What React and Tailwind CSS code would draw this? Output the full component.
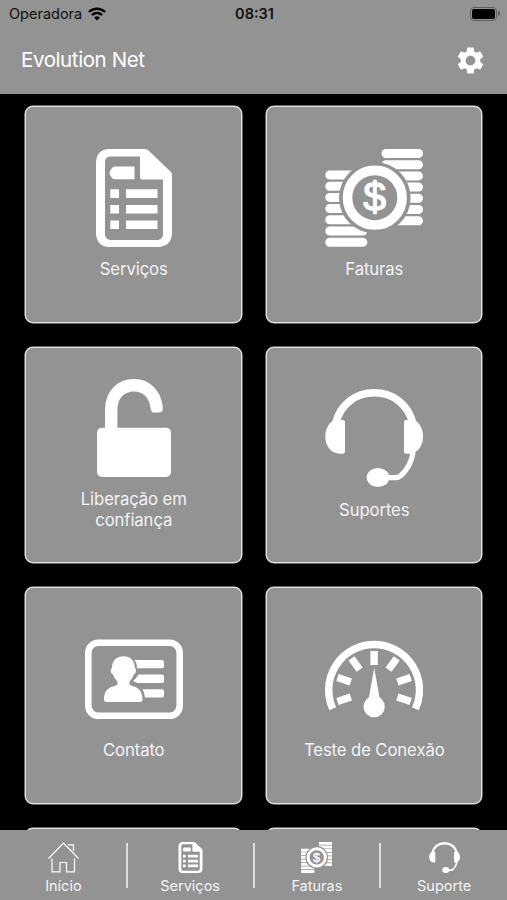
import React from 'react';

function ServicesIcon({ className }) {
  return (
    <svg viewBox="0 0 98 98" className={className} fill="currentColor">
      <path
        fillRule="evenodd"
        d="M23 0H60Q62 0 63.500 1.500L86 23Q87 24 87 26V85Q86 97 74 98H23Q12 97 11 85V13Q12 1 23 0ZM25 7.500Q20 8 20 13V85Q20 90 25 91H73Q78 90 78 85V30.500H57Q55 30.500 55 28V7.500Z"
      />
      <path d="M29.500 17.500H49.500V30.300H29.500Q28 30.300 27 29L25 26Q24 24 25 22L27 19Q28 17.500 29.500 17.500Z" />
      <path d="M25.300 40.300H34V49H25.300ZM41 40.300H72.500V49H41ZM25.300 56H34V64.500H25.300ZM41 56H72.500V64.500H41ZM25.300 71.500H34V80H25.300ZM41 71.500H72.500V80H41Z" />
    </svg>
  );
}

const stack = [0, 1, 2, 3, 4, 5, 6];

function BillsIcon({ className, square }) {
  return (
    <svg viewBox="0 0 98 98" className={className} fill="currentColor">
      {stack.map((i) => (
        <React.Fragment key={i}>
          <rect x="56.500" y={i * 11.2} width="41.500" height="9" rx={square ? 1 : 4.5} />
          <rect x="0.300" y={21.5 + i * 11.2} width="42" height="9" rx={square ? 1 : 4.5} />
        </React.Fragment>
      ))}
      <circle cx="49.800" cy="48.700" r="35.800" fill="#939393" />
      <circle cx="49.800" cy="48.700" r="27.300" fill="none" stroke="currentColor" strokeWidth="9.600" />
      <text
        x="49.600"
        y="62"
        textAnchor="middle"
        fontSize="41"
        fontFamily="Liberation Sans, sans-serif"
        stroke="currentColor"
        strokeWidth="1.300"
        strokeLinejoin="round"
      >
        $
      </text>
    </svg>
  );
}

function UnlockIcon({ className }) {
  return (
    <svg viewBox="0 0 98 98" className={className} fill="currentColor">
      <rect x="12" y="48.700" width="74" height="49.300" rx="5" />
      <path
        d="M26.200 52V31C26.200 15 36.500 6.200 48.800 6.200C61 6.200 69.800 14.500 71.400 27.500"
        fill="none"
        stroke="currentColor"
        strokeWidth="12.400"
      />
      <path d="M65.200 27L77.400 26Q78 30 77.600 31.500Q77 33 75 33.300L69 33.700Q66.500 33.500 66 31Z" />
    </svg>
  );
}

function HeadsetIcon({ className }) {
  return (
    <svg viewBox="0 0 98 98" className={className} fill="currentColor">
      <path
        d="M10.500 35C15 15 31 3.800 49.300 3.800S83.500 15 88 35"
        fill="none"
        stroke="currentColor"
        strokeWidth="7.600"
      />
      <path d="M10 31H18Q20 31 20 33V62.500Q20 64.700 17.500 64.700H15C6 64.700 0.300 57 0.300 47.500C0.300 41 3 35 8 31.500Z" />
      <path d="M88.500 31H81Q79 31 79 33V62.500Q79 64.700 81 64.700H84C92.500 64.700 98 57 98 47.500C98 41 95.500 35 90.500 31.500Z" />
      <path
        d="M88.200 63C86 76 81 82 76 86.500Q73.500 88.700 70 88.700H58"
        fill="none"
        stroke="currentColor"
        strokeWidth="5.200"
      />
      <ellipse cx="53" cy="88.500" rx="11.300" ry="9.400" />
    </svg>
  );
}

function ContactIcon({ className }) {
  return (
    <svg viewBox="0 0 98 98" className={className} fill="currentColor">
      <rect
        x="3.300"
        y="12.800"
        width="91.400"
        height="73"
        rx="10"
        fill="none"
        stroke="currentColor"
        strokeWidth="6.600"
      />
      <path d="M38.500 26.300C45.500 26.300 49.800 30.500 49.800 38C51.800 39 51.300 43.500 48.800 44.500C47.800 48 45.800 50 44.500 51.500V54.500C46.500 57 57.500 55.500 57.500 69.500Q57.500 72 55 72H21.500Q19 72 19 69.500C19 55.500 30.500 57 32.500 54.500V51.500C31 50 29 48 28 44.500C25.500 43.500 25 39 27 38C27 30.500 31.500 26.300 38.500 26.300Z" />
      <path d="M49.500 30H77Q79 30 79 32V36.300Q79 38.300 77 38.300H52Q52.500 34 49.500 30ZM53.500 44.500H77Q79 44.500 79 46.500V51Q79 53 77 53H52.500L48 51Q51 49 53.500 44.500ZM57.500 59.300H77Q79 59.300 79 61.300V65.500Q79 67.500 77 67.500H60Q59.500 63 57.500 59.300Z" />
    </svg>
  );
}

const ticks = [-108, -72, -36, 0, 36, 72, 108];

function GaugeIcon({ className }) {
  return (
    <svg viewBox="0 0 98 98" className={className} fill="currentColor">
      <path
        d="M7.800 78.800A45.400 45.400 0 1 1 90.400 78.800"
        fill="none"
        stroke="currentColor"
        strokeWidth="7.400"
      />
      {ticks.map((a) => (
        <rect key={a} x="45.400" y="21" width="7.400" height="14" transform={`rotate(${a} 49.1 59.500)`} />
      ))}
      <path d="M49.200 38L54.800 69H43.600Z" />
      <circle cx="49.200" cy="76.700" r="10.600" />
    </svg>
  );
}

function HomeIcon({ className }) {
  return (
    <svg viewBox="0 0 31 31" className={className} fill="none" stroke="currentColor" strokeWidth="1.200">
      <path d="M0.500 16.500L15.500 1L30.500 16.500" />
      <path d="M4 16.500V29.800H12V20.500H18.500V29.800H26.500V16.500" />
      <path d="M20 2.800H25.500V9" />
    </svg>
  );
}

function WifiIcon({ className }) {
  return (
    <svg viewBox="0 0 18 14" className={className} fill="none" stroke="currentColor" strokeWidth="2.300">
      <path d="M0.900 5A11.700 11.700 0 0 1 17.100 5" />
      <path d="M3.900 8.100A7.300 7.300 0 0 1 14.100 8.100" />
      <path d="M9 13.600L6.200 10.700A4 4 0 0 1 11.800 10.700Z" fill="currentColor" stroke="none" />
    </svg>
  );
}

function GearIcon({ className }) {
  return (
    <svg viewBox="2 2 20 20" className={className} fill="currentColor">
      <path d="M19.140 12.940c.04-.3.060-.61.060-.94 0-.32-.02-.64-.07-.94l2.030-1.580c.18-.14.230-.41.120-.61l-1.920-3.320c-.12-.22-.37-.29-.59-.22l-2.390.96c-.5-.38-1.030-.7-1.620-.94l-.36-2.540c-.04-.24-.24-.41-.48-.41h-3.840c-.24 0-.43.17-.47.41l-.36 2.540c-.59.24-1.130.57-1.620.94l-2.390-.96c-.22-.08-.47 0-.59.22L2.740 8.870c-.12.21-.08.47.12.61l2.030 1.580c-.05.3-.09.63-.09.94s.02.64.07.94l-2.030 1.580c-.18.14-.23.41-.12.61l1.920 3.320c.12.22.37.29.59.22l2.390-.96c.5.38 1.030.7 1.620.94l.36 2.540c.05.24.24.41.48.41h3.840c.24 0 .44-.17.47-.41l.36-2.540c.59-.24 1.130-.56 1.620-.94l2.390.96c.22.08.47 0 .59-.22l1.920-3.320c.12-.22.070-.47-.12-.61l-2.010-1.580zM12 15.600c-1.980 0-3.600-1.620-3.600-3.600s1.620-3.600 3.600-3.600 3.600 1.620 3.600 3.600-1.620 3.600-3.600 3.600z" />
    </svg>
  );
}

const cards = [
  { label: 'Serviços', Icon: ServicesIcon },
  { label: 'Faturas', Icon: BillsIcon },
  { label: 'Liberação em confiança', Icon: UnlockIcon, tall: true },
  { label: 'Suportes', Icon: HeadsetIcon },
  { label: 'Contato', Icon: ContactIcon },
  { label: 'Teste de Conexão', Icon: GaugeIcon },
  { label: '', Icon: null },
  { label: '', Icon: null },
];

const tabs = [
  { label: 'Início', Icon: HomeIcon },
  { label: 'Serviços', Icon: ServicesIcon },
  { label: 'Faturas', Icon: BillsIcon },
  { label: 'Suporte', Icon: HeadsetIcon },
];

export default function App() {
  return (
    <div className="flex h-[900px] w-[507px] flex-col overflow-hidden bg-black font-['Inter',sans-serif] text-white">
      <header className="h-[94px] shrink-0 bg-[#939393]">
        <div className="grid h-[27px] grid-cols-3 items-center pr-[7px] pl-[9px] text-[#111]">
          <div className="flex items-center gap-[6px]">
            <span className="pt-px text-[14.500px] leading-none">Operadora</span>
            <WifiIcon className="h-[14px] w-[18px] text-black" />
          </div>
          <span className="pt-px text-center text-[14.500px] leading-none font-semibold">08:31</span>
          <div className="flex items-center justify-end gap-px">
            <div className="h-[14px] w-[27px] rounded-[4px] border border-[#606060] p-px">
              <div className="h-full rounded-[2px] bg-black" />
            </div>
            <div className="h-[5px] w-[2px] rounded-r-full bg-[#606060]" />
          </div>
        </div>
        <div className="flex h-[67px] items-center justify-between pr-[23px] pl-[21px]">
          <h1 className="text-[20.500px] leading-none tracking-[-0.4px]">Evolution Net</h1>
          <GearIcon className="h-[27px] w-[27px]" />
        </div>
      </header>

      <main className="min-h-0 flex-1 overflow-hidden px-[25px] pt-[12px]">
        <div className="grid auto-rows-[216.500px] grid-cols-2 gap-x-[24px] gap-y-[24.200px]">
          {cards.map(({ label, Icon, tall }, i) => (
            <div
              key={i}
              className={`flex flex-col items-center rounded-[8px] border border-[#e2e2e2] bg-[#939393] pl-px shadow-[0_0_0_0.5px_#d0d0d0] ${tall ? 'pt-[31px]' : 'pt-[41.500px]'}`}
            >
              {Icon && <Icon className="h-[98px] w-[98px] shrink-0" />}
              <span className="mt-[12.500px] max-w-[150px] text-center text-[16.700px] leading-[21px] tracking-[-0.1px] text-[#f4f4f4]">
                {label}
              </span>
            </div>
          ))}
        </div>
      </main>

      <nav className="grid h-[70px] shrink-0 grid-cols-4 bg-[#939393]">
        {tabs.map(({ label, Icon }, i) => (
          <div key={i} className="flex items-start pt-[13px]">
            <div className="-mt-[1.500px] flex flex-1 flex-col items-center pl-px">
              <Icon className="h-[31px] w-[31px] shrink-0" square />
              <span className="mt-[4.500px] text-[14.500px] leading-[18px] text-[#f4f4f4]">{label}</span>
            </div>
            {i < 3 && <div className="-mr-px h-[45px] w-[2px] bg-[#dedede]" />}
          </div>
        ))}
      </nav>
    </div>
  );
}
